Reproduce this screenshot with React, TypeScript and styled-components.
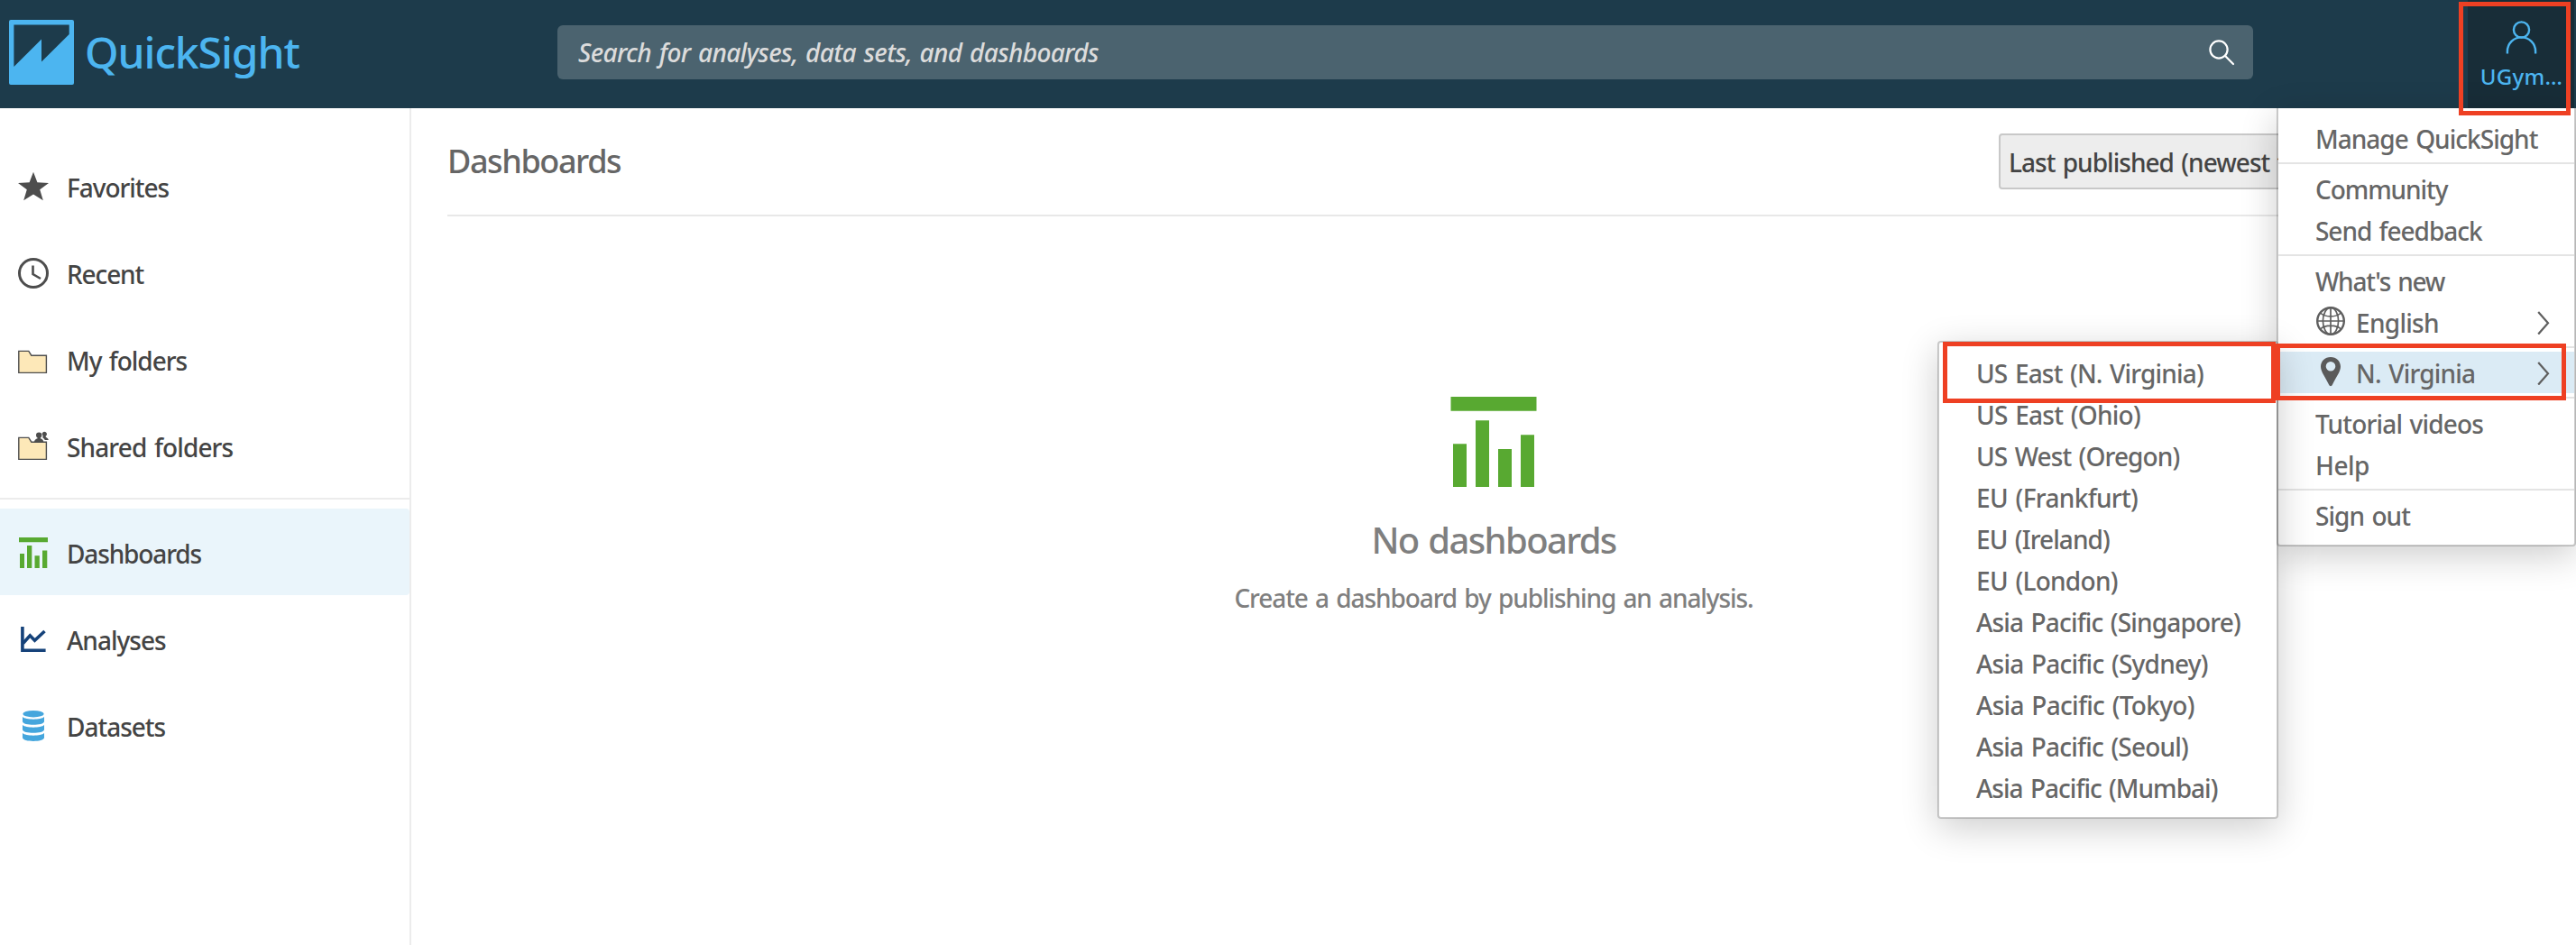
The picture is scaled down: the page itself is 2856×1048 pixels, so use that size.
import React from "react";
import styled, { createGlobalStyle, css } from "styled-components";

const GlobalStyle = createGlobalStyle`
  * { box-sizing: border-box; }
  body {
    margin: 0;
    background: #fff;
    font-family: "Noto Sans", "Open Sans", sans-serif;
    font-size: 28px;
    font-weight: 500;
    color: #444;
    overflow: hidden;
  }
`;

const Page = styled.div`
  position: relative;
  width: 2856px;
  height: 1048px;
  display: flex;
  flex-direction: column;
  overflow: hidden;
`;

const Label = styled.span<{ $track: number }>`
  letter-spacing: ${(p) => p.$track}px;
  word-spacing: 2px;
  white-space: nowrap;
`;

/* ---------- header ---------- */

const Header = styled.header`
  flex: none;
  height: 120px;
  display: flex;
  background: #1d3b4b;
`;

const Brand = styled.div`
  width: 618px;
  display: flex;
  align-items: center;
  gap: 12px;
  padding: 0 0 4px 10px;
  color: #4cb5f0;
  font-size: 48px;
  line-height: 60px;
`;

const SearchBox = styled.div`
  width: 1880px;
  height: 60px;
  margin-top: 28px;
  padding: 0 20px 0 23px;
  display: flex;
  align-items: center;
  justify-content: space-between;
  border-radius: 6px;
  background: #4b636f;
  color: #dcdcdc;
  font-style: italic;
  line-height: 40px;
`;

const UserButton = styled.div`
  width: 118px;
  margin: 0 2px 0 auto;
  padding-top: 22px;
  display: flex;
  flex-direction: column;
  align-items: center;
  background: #182d38;
  color: #4cb5f0;
  font-size: 24px;
  line-height: 34px;
`;

const UserName = styled(Label)`
  margin: 8px 0 0 1px;
`;

/* ---------- body ---------- */

const Body = styled.div`
  flex: 1;
  display: flex;
`;

const Sidebar = styled.nav`
  width: 456px;
  padding-top: 38px;
  border-right: 2px solid #ececec;
`;

const NavGroup = styled.div`
  & + & {
    margin-top: 10px;
    padding-top: 10px;
    border-top: 2px solid #ececec;
  }
`;

const NavItem = styled.div<{ $selected?: boolean }>`
  height: 96px;
  padding: 2px 0 0 20px;
  display: flex;
  align-items: center;
  gap: 20px;
  line-height: 40px;

  & > span {
    padding-top: 2px;
  }

  ${(p) =>
    p.$selected &&
    css`
      background: #eaf5fb;
      border-radius: 0 4px 4px 0;
    `}
`;

const Main = styled.main`
  flex: 1;
  padding: 28px 40px 0;
`;

const Toolbar = styled.div`
  display: flex;
  justify-content: space-between;
  align-items: center;
  padding-bottom: 28px;
  border-bottom: 2px solid #e8e8e8;
`;

const Title = styled.h1`
  margin: 0;
  font-size: 36px;
  font-weight: 500;
  line-height: 48px;
  color: #666;
`;

const SortButton = styled.div`
  width: 600px;
  height: 62px;
  padding: 1px 8px 0 9px;
  display: flex;
  align-items: center;
  border: 2px solid #c8c8c8;
  border-radius: 4px;
  background: #ededed;
  line-height: 40px;
`;

const Empty = styled.div`
  padding-top: 200px;
  display: flex;
  flex-direction: column;
  align-items: center;
  color: #7f7f7f;
`;

const EmptyTitle = styled.h2`
  margin: 32px 0 0;
  font-size: 40px;
  font-weight: 500;
  line-height: 54px;
`;

const EmptyText = styled.p`
  margin: 17px 0 0;
  line-height: 40px;
`;

/* ---------- menus ---------- */

const Menu = styled.div`
  position: absolute;
  padding: 10px 0;
  border: 2px solid rgba(0, 0, 0, 0.2);
  border-radius: 4px;
  background: #fff;
  background-clip: padding-box;
  box-shadow: 0 10px 40px rgba(0, 0, 0, 0.2);
  color: #666;
`;

const UserMenu = styled(Menu)`
  top: 120px;
  left: 2524px;
  width: 332px;
  border-top: 0;
  border-top-left-radius: 0;
  border-top-right-radius: 0;
`;

const RegionMenu = styled(Menu)`
  top: 378px;
  left: 2148px;
  width: 378px;
`;

const MenuGroup = styled.div`
  & + & {
    margin-top: 4px;
    padding-top: 4px;
    border-top: 2px solid #e4e4e4;
  }
`;

const MenuItem = styled.div<{ $active?: boolean }>`
  height: 46px;
  padding: 1px 27px 0 41px;
  display: flex;
  align-items: center;
  line-height: 40px;
  background: ${(p) => (p.$active ? "#dbebf5" : "transparent")};

  & > svg:first-child {
    margin: -3px 12px 0 1px;
  }

  & > svg:last-child {
    margin-left: auto;
  }
`;

const Highlight = styled.div<{ $x: number; $y: number; $w: number; $h: number }>`
  position: absolute;
  left: ${(p) => p.$x}px;
  top: ${(p) => p.$y}px;
  width: ${(p) => p.$w}px;
  height: ${(p) => p.$h}px;
  border: 5px solid #ee4023;
  pointer-events: none;
`;

/* ---------- icons ---------- */

const Logo = () => (
  <svg width="72" height="72" viewBox="0 0 72 72">
    <path
      fill="#4cb5f0"
      fillRule="evenodd"
      d="M2 0H70a2 2 0 0 1 2 2V70a2 2 0 0 1-2 2H2a2 2 0 0 1-2-2V2a2 2 0 0 1 2-2ZM5.4 5.4V52L36 21.5V46.5L66.7 16V5.4Z"
    />
  </svg>
);

const SearchIcon = () => (
  <svg width="30" height="30" viewBox="0 0 30 30" fill="none" stroke="#fff" strokeWidth="2.2">
    <circle cx="12" cy="12" r="9.6" />
    <path d="M18.8 18.8 28 28" strokeLinecap="round" />
  </svg>
);

const UserIcon = () => (
  <svg width="36" height="38" viewBox="0 0 36 38" fill="none" stroke="#4cb5f0" strokeWidth="2.4">
    <circle cx="18.5" cy="11" r="8.6" />
    <path d="M2.900 37.500V35a15.600 15.600 0 0 1 31.200 0V37.500" />
  </svg>
);

const Star = () => (
  <svg width="34" height="34" viewBox="0 0 34 34">
    <path fill="#4d4d4d" d="M17 .8 21.400 12.300 34 13 24.200 20.300 27.800 32.300 17 25.600 6.200 32.300 9.800 20.300 0 13 12.600 12.300Z" />
  </svg>
);

const Clock = () => (
  <svg width="34" height="34" viewBox="0 0 34 34" fill="none" stroke="#4d4d4d">
    <circle cx="17" cy="17" r="15.5" strokeWidth="3" />
    <path d="M16.500 8.500V18L25 23" strokeWidth="2.600" />
  </svg>
);

const folderPath = "M.8 7.400H11.800L14.800 12.200H31.400V31.400H.8Z";

const Folder = () => (
  <svg width="34" height="34" viewBox="0 0 34 34">
    <path d={folderPath} fill="#fde8b8" stroke="#4d4d4d" strokeWidth="1.400" />
  </svg>
);

const SharedFolder = () => (
  <svg width="34" height="34" viewBox="0 0 34 34">
    <path d={folderPath} fill="#fde8b8" stroke="#4d4d4d" strokeWidth="1.400" />
    <g fill="#4d4d4d">
      <circle cx="23.200" cy="4.600" r="3.200" />
      <path d="M21.600 6H24.800V8.200C27 8.800 28.200 10 28.300 12.200H18C18.100 10 19.400 8.800 21.600 8.200Z" />
      <path d="M26.600 3.200A2.700 2.700 0 1 1 30.600 5.800L30.800 6.800C32.600 7.600 33.600 8.800 33.800 10H29.800C29.200 8.800 28.400 7.900 27.200 7.200 27.800 5.800 27.600 4.400 26.600 3.200Z" />
    </g>
  </svg>
);

const DashboardIcon = () => (
  <svg width="34" height="34" viewBox="0 0 34 34" fill="#58a931">
    <path d="M1 0H33V5.200H1ZM2 18H7V34H2ZM10 9H15.300V34H10ZM18.500 20.200H23.800V34H18.500ZM27 14.400H32.300V34H27Z" />
  </svg>
);

const AnalysisIcon = () => (
  <svg width="34" height="34" viewBox="0 0 34 34" fill="none" stroke="#15427a" strokeWidth="3.600">
    <path d="M4.900 3V29.200H30.600" />
    <path d="M5.500 21.500 13.300 12.800 18.500 18.300 29.500 8" />
  </svg>
);

const DatasetIcon = () => (
  <svg width="34" height="34" viewBox="0 0 34 34" fill="#45a6dd">
    <ellipse cx="17" cy="3.700" rx="11.700" ry="3.700" />
    <path d="M5 7C8 10.500 26 10.500 29 7V12.300C28.500 17 5.500 17 5 12.300Z" />
    <path d="M5 16C8 19.500 26 19.500 29 16V21.300C28.500 26 5.500 26 5 21.300Z" />
    <path d="M5 25C8 28.500 26 28.500 29 25V30.300C28.500 35.200 5.500 35.200 5 30.300Z" />
  </svg>
);

const EmptyIcon = () => (
  <svg width="96" height="100" viewBox="0 0 96 100" fill="#58a931">
    <path d="M.5 0H95.500V15.800H.5ZM3 52.200H18V100H3ZM28 26.200H43V100H28ZM53 58H68V100H53ZM78 42.200H93V100H78Z" />
  </svg>
);

const Globe = () => (
  <svg width="32" height="32" viewBox="0 0 32 32" fill="none" stroke="#5f5f5f" strokeWidth="1.700">
    <circle cx="16" cy="16" r="14.800" strokeWidth="2.400" />
    <ellipse cx="16" cy="16" rx="8.600" ry="14.800" />
    <path d="M16 1V31M1 16H31M4.500 7C10 12.200 22 12.200 27.500 7M4.500 25C10 19.800 22 19.800 27.500 25" />
  </svg>
);

const Pin = () => (
  <svg width="32" height="34" viewBox="0 0 32 34">
    <path
      fill="#5a5a5a"
      fillRule="evenodd"
      d="M16 1C22.300 1 27 5.600 27 11.600 27 17.500 21.500 24 18 31.500 17 33.800 15 33.800 14 31.500 10.500 24 5 17.500 5 11.600 5 5.600 9.700 1 16 1ZM16 6A5.300 5.300 0 1 0 16 16.600 5.300 5.300 0 1 0 16 6Z"
    />
  </svg>
);

const Chevron = () => (
  <svg width="14" height="26" viewBox="0 0 14 26" fill="none" stroke="#5f5f5f" strokeWidth="2.200">
    <path d="M1.200 1 12 13.300 1.200 25.600" />
  </svg>
);

/* ---------- data ---------- */

type Entry = { text: string; track: number; icon?: React.ReactNode; selected?: boolean; more?: boolean };

const navGroups: Entry[][] = [
  [
    { text: "Favorites", track: -1.05, icon: <Star /> },
    { text: "Recent", track: -1.13, icon: <Clock /> },
    { text: "My folders", track: -1.02, icon: <Folder /> },
    { text: "Shared folders", track: -0.87, icon: <SharedFolder /> },
  ],
  [
    { text: "Dashboards", track: -1.14, icon: <DashboardIcon />, selected: true },
    { text: "Analyses", track: -0.99, icon: <AnalysisIcon /> },
    { text: "Datasets", track: -1.02, icon: <DatasetIcon /> },
  ],
];

const menuGroups: Entry[][] = [
  [{ text: "Manage QuickSight", track: -0.98 }],
  [
    { text: "Community", track: -1.08 },
    { text: "Send feedback", track: -1.03 },
  ],
  [
    { text: "What's new", track: -1.25 },
    { text: "English", track: -0.71, icon: <Globe />, more: true },
  ],
  [{ text: "N. Virginia", track: -0.8, icon: <Pin />, more: true, selected: true }],
  [
    { text: "Tutorial videos", track: -0.82 },
    { text: "Help", track: -0.53 },
  ],
  [{ text: "Sign out", track: -0.95 }],
];

const regions: Entry[] = [
  { text: "US East (N. Virginia)", track: -0.82 },
  { text: "US East (Ohio)", track: -0.73 },
  { text: "US West (Oregon)", track: -0.9 },
  { text: "EU (Frankfurt)", track: -0.66 },
  { text: "EU (Ireland)", track: -0.91 },
  { text: "EU (London)", track: -0.72 },
  { text: "Asia Pacific (Singapore)", track: -0.84 },
  { text: "Asia Pacific (Sydney)", track: -0.76 },
  { text: "Asia Pacific (Tokyo)", track: -0.7 },
  { text: "Asia Pacific (Seoul)", track: -0.8 },
  { text: "Asia Pacific (Mumbai)", track: -0.98 },
];

export default function App() {
  return (
    <Page>
      <GlobalStyle />
      <Header>
        <Brand>
          <Logo />
          <Label $track={-1.1}>QuickSight</Label>
        </Brand>
        <SearchBox>
          <Label $track={-0.66}>Search for analyses, data sets, and dashboards</Label>
          <SearchIcon />
        </SearchBox>
        <UserButton>
          <UserIcon />
          <UserName $track={0.3}>UGym…</UserName>
        </UserButton>
      </Header>

      <Body>
        <Sidebar>
          {navGroups.map((group, i) => (
            <NavGroup key={i}>
              {group.map((item) => (
                <NavItem key={item.text} $selected={item.selected}>
                  {item.icon}
                  <Label $track={item.track}>{item.text}</Label>
                </NavItem>
              ))}
            </NavGroup>
          ))}
        </Sidebar>
        <Main>
          <Toolbar>
            <Title>
              <Label $track={-1.4}>Dashboards</Label>
            </Title>
            <SortButton>
              <Label $track={-0.97}>Last published (newest to oldest)</Label>
            </SortButton>
          </Toolbar>
          <Empty>
            <EmptyIcon />
            <EmptyTitle>
              <Label $track={-1.64}>No dashboards</Label>
            </EmptyTitle>
            <EmptyText>
              <Label $track={-1.08}>Create a dashboard by publishing an analysis.</Label>
            </EmptyText>
          </Empty>
        </Main>
      </Body>

      <UserMenu>
        {menuGroups.map((group, i) => (
          <MenuGroup key={i}>
            {group.map((item) => (
              <MenuItem key={item.text} $active={item.selected}>
                {item.icon}
                <Label $track={item.track}>{item.text}</Label>
                {item.more && <Chevron />}
              </MenuItem>
            ))}
          </MenuGroup>
        ))}
      </UserMenu>
      <RegionMenu>
        {regions.map((item) => (
          <MenuItem key={item.text}>
            <Label $track={item.track}>{item.text}</Label>
          </MenuItem>
        ))}
      </RegionMenu>

      <Highlight $x={2726} $y={2} $w={124} $h={126} />
      <Highlight $x={2523} $y={381} $w={322} $h={63} />
      <Highlight $x={2154} $y={379} $w={369} $h={68} />
    </Page>
  );
}
